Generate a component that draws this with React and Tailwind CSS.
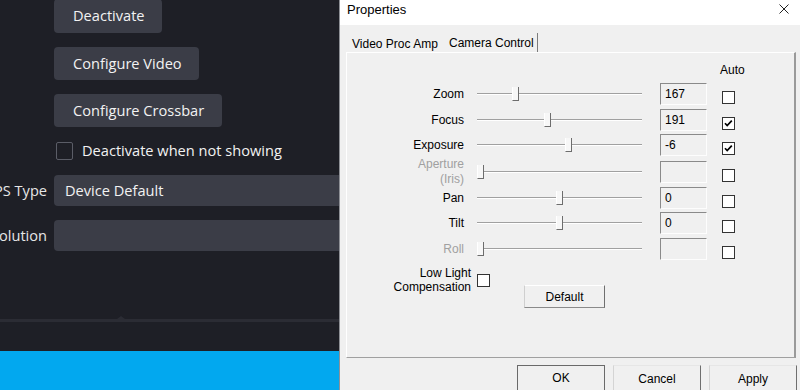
import React from "react";

const rows = [
  { label: ["Zoom"], h: 26, thumb: 39, val: "167", checked: false },
  { label: ["Focus"], h: 25, thumb: 71, val: "191", checked: true },
  { label: ["Exposure"], h: 27, thumb: 92, val: "-6", checked: true },
  { label: ["Aperture", "(Iris)"], h: 26, thumb: 4, val: "", disabled: true },
  { label: ["Pan"], h: 25, thumb: 83, val: "0" },
  { label: ["Tilt"], h: 26, thumb: 83, val: "0" },
  { label: ["Roll"], h: 26, thumb: 4, val: "", disabled: true },
];

function Slider({ thumb }) {
  const c = thumb;
  return (
    <svg width="165" height="22" className="ml-[13px] shrink-0" viewBox="0 0 165 22">
      <line x1="0" y1="10.5" x2="165" y2="10.5" stroke="#a0a0a0" strokeWidth="1" />
      <line x1="0" y1="11.5" x2="165" y2="11.5" stroke="#ffffff" strokeWidth="1" />
      <rect x={c - 3} y="4" width="6" height="14" fill="#f7f7f7" />
      <line x1={c - 3.5} y1="4" x2={c - 3.5} y2="17" stroke="#ffffff" strokeWidth="1" />
      <line x1={c + 2.5} y1="4" x2={c + 2.5} y2="18" stroke="#6d6d6d" strokeWidth="1" />
      <line x1={c - 3.5} y1="17.5" x2={c + 3} y2="17.5" stroke="#6d6d6d" strokeWidth="1" />
    </svg>
  );
}

function WinCheck({ checked, className = "" }) {
  return (
    <div className={`w-[13px] h-[13px] border border-[#333333] bg-white shrink-0 ${className}`}>
      {checked && (
        <svg width="11" height="11" viewBox="0 0 11 11">
          <path d="M2 5.2 L4.2 7.6 L8.8 2.6" fill="none" stroke="#000" strokeWidth="1.7" />
        </svg>
      )}
    </div>
  );
}

function DarkButton({ children, className = "" }) {
  return (
    <div
      className={`bg-[#3b3d47] rounded-[4px] flex items-center pl-[19px] text-[#f2f2f2] text-[14.6px] ${className}`}
    >
      {children}
    </div>
  );
}

function LeftPanel() {
  return (
    <div className="w-[339px] h-[390px] shrink-0 bg-[#1e1f26] flex flex-col overflow-hidden font-['Open_Sans',sans-serif] relative">
      <div className="flex flex-col pl-[54px]">
        <DarkButton className="-mt-[1px] h-[34px] w-[108px]">Deactivate</DarkButton>
        <DarkButton className="mt-[14px] h-[33px] w-[145px]">Configure Video</DarkButton>
        <DarkButton className="mt-[14px] h-[33px] w-[168px]">Configure Crossbar</DarkButton>
        <div className="mt-[15px] flex items-center h-[18px]">
          <div className="ml-[2px] w-[17px] h-[18px] rounded-[2px] border-[1.5px] border-[#5b5d67] bg-[#1e1f26]" />
          <span className="ml-[9px] text-[14.6px] text-[#f2f2f2]">Deactivate when not showing</span>
        </div>
      </div>
      <div className="mt-[15px] flex items-center h-[31px]">
        <div className="w-[47px] shrink-0 flex justify-end overflow-hidden whitespace-nowrap text-[14.6px] text-[#e6e6e6]">
          <span>FPS Type</span>
        </div>
        <div className="ml-[7px] flex-1 -mr-[10px] h-[31px] rounded-[4px] bg-[#3b3d47] flex items-center pl-[11px] text-[14.6px] text-[#f2f2f2]">
          Device Default
        </div>
      </div>
      <div className="mt-[14px] flex items-center h-[31px]">
        <div className="w-[47px] shrink-0 flex justify-end overflow-hidden whitespace-nowrap text-[14.6px] text-[#e6e6e6]">
          <span>Resolution</span>
        </div>
        <div className="ml-[7px] flex-1 -mr-[10px] h-[31px] rounded-[4px] bg-[#3b3d47]" />
      </div>
      <div className="mt-[68px] h-[3px] bg-[#2b2c34] relative">
        <div className="absolute left-[117px] -top-[3px] w-0 h-0 border-l-[4px] border-r-[4px] border-b-[3px] border-l-transparent border-r-transparent border-b-[#2b2c34]" />
      </div>
      <div className="h-[29px] bg-[#1e1f26]" />
      <div className="flex-1 bg-[#02a8ef]" />
    </div>
  );
}

function Dialog() {
  return (
    <div className="w-[461px] h-[390px] shrink-0 border-l border-[#8e9096] bg-[#f0f0f0] flex flex-col overflow-hidden font-['Liberation_Sans',Arial,sans-serif] text-black">
      <div className="h-[25px] bg-white flex items-start justify-between shrink-0">
        <span className="pl-[7px] pt-[2px] text-[13px] leading-[15px]">Properties</span>
        <svg width="10" height="10" viewBox="0 0 10 10" className="mt-[4px] mr-[11px]">
          <path d="M0.5 0.5 L9.5 9.5 M9.5 0.5 L0.5 9.5" stroke="#222" strokeWidth="1" fill="none" />
        </svg>
      </div>
      <div className="flex flex-col pl-[6px] pt-[8px]">
        <div className="flex h-[19px] text-[12px] leading-[14px]">
          <div className="w-[98px] pl-[6px] pt-[4px]">Video Proc Amp</div>
          <div className="w-[94px] pl-[5px] pt-[3px] border-r border-[#7c7c7c] whitespace-nowrap">Camera Control</div>
        </div>
        <div className="w-[450px] h-[306px] border-t border-l border-t-white border-l-white border-r-[2px] border-r-[#9a9a9a] border-b border-b-[#a0a0a0] flex flex-col text-[12px]">
          <div className="pt-[10px] ml-[373px] leading-[14px]">Auto</div>
          <div className="mt-[6px] flex flex-col">
            {rows.map((r, i) => (
              <div key={i} className="flex items-start shrink-0" style={{ height: r.h }}>
                <div
                  className={`w-[117px] h-[22px] shrink-0 flex flex-col items-end justify-center text-right leading-[15px] ${
                    r.disabled ? "text-[#a0a0a0]" : "text-black"
                  }`}
                >
                  {r.label.map((l, j) => (
                    <span key={j}>{l}</span>
                  ))}
                </div>
                <Slider thumb={r.thumb} />
                <div className="ml-[18px] w-[47px] h-[22px] shrink-0 border-t border-l border-t-[#8a8a8a] border-l-[#8a8a8a] border-r border-b border-r-[#fdfdfd] border-b-[#fdfdfd] pl-[4px] pt-[3px] leading-[14px]">
                  {r.val}
                </div>
                <WinCheck checked={r.checked} className="ml-[15px] mt-[8px]" />
              </div>
            ))}
          </div>
          <div className="mt-[2px] flex items-start">
            <div className="w-[124px] shrink-0 text-right leading-[14px] flex flex-col items-end">
              <span>Low Light</span>
              <span>Compensation</span>
            </div>
            <WinCheck className="ml-[6px] mt-[8px]" />
            <div className="ml-[34px] mt-[19px] w-[81px] h-[23px] flex items-center justify-center border-t border-l border-t-white border-l-[#cfcfcf] border-r border-b border-r-[#6f6f6f] border-b-[#8a8a8a]">
              Default
            </div>
          </div>
        </div>
        <div className="mt-[7px] ml-[171px] flex gap-[8px] text-[12px]">
          <div className="w-[88px] h-[26px] flex items-center justify-center border border-[#6a6a6a]">OK</div>
          <div className="w-[88px] h-[26px] flex items-center justify-center border-t border-l border-t-[#e6e6e6] border-l-[#d4d4d4] border-r border-r-[#6f6f6f]">
            Cancel
          </div>
          <div className="w-[88px] h-[26px] flex items-center justify-center border-t border-l border-t-[#e6e6e6] border-l-[#d4d4d4] border-r border-r-[#6f6f6f]">
            Apply
          </div>
        </div>
      </div>
    </div>
  );
}

export default function App() {
  return (
    <div className="w-[800px] h-[390px] flex overflow-hidden">
      <LeftPanel />
      <Dialog />
    </div>
  );
}
